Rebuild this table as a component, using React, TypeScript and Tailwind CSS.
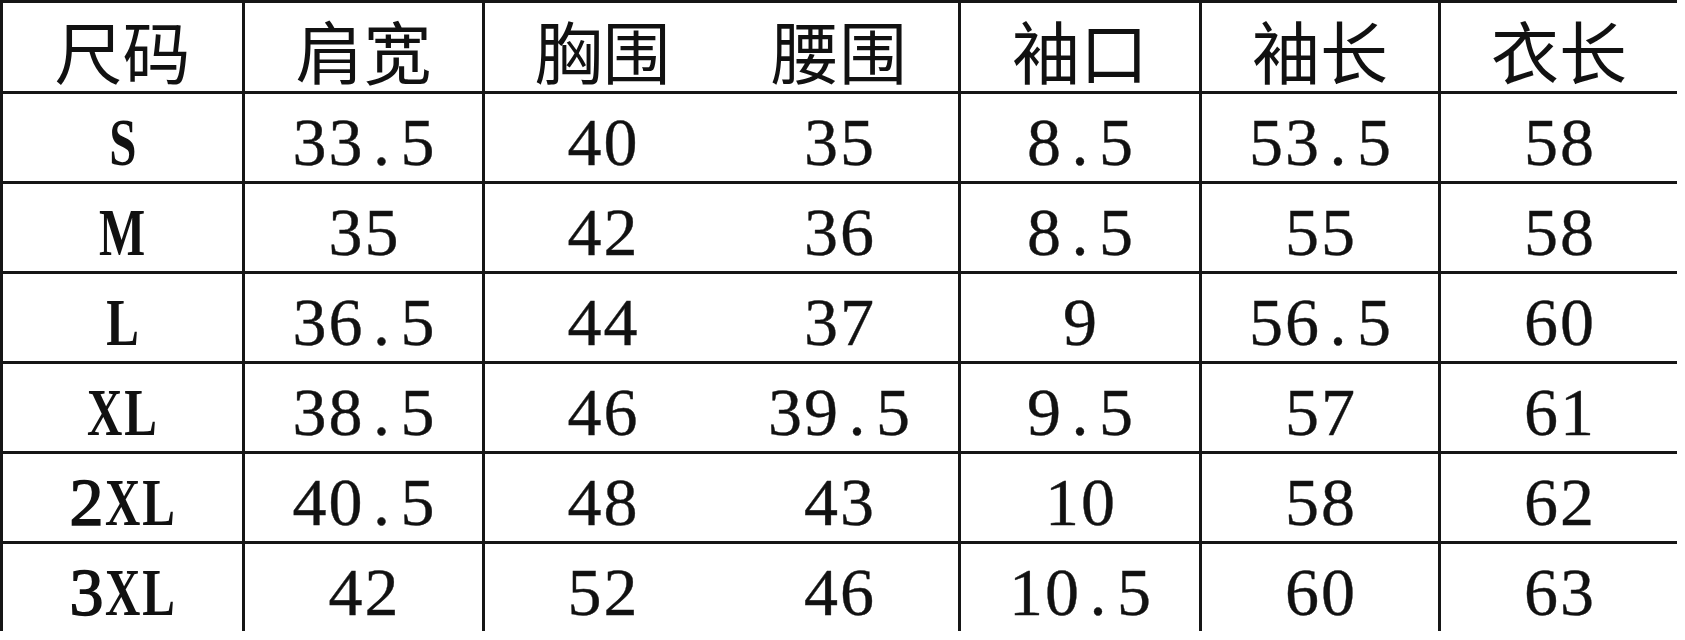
import React from "react";

const headers = ["尺码", "肩宽", "胸围", "腰围", "袖口", "袖长", "衣长"];
const rows: string[][] = [
  ["S", "33.5", "40", "35", "8.5", "53.5", "58"],
  ["M", "35", "42", "36", "8.5", "55", "58"],
  ["L", "36.5", "44", "37", "9", "56.5", "60"],
  ["XL", "38.5", "46", "39.5", "9.5", "57", "61"],
  ["2XL", "40.5", "48", "43", "10", "58", "62"],
  ["3XL", "42", "52", "46", "10.5", "60", "63"],
];

const colW = ["w-[242px]", "w-[240px]", "w-[238px]", "w-[238px]", "w-[241px]", "w-[239px]", "w-[239px]"];

function cellBorder(ci: number) {
  return ci === 3 ? "border-l-0" : "border-l-[3px]";
}

function Mono({ text, first }: { text: string; first: boolean }) {
  return (
    <span className="flex">
      {text.split("").map((ch, i) => {
        const isLetter = /[A-Z]/.test(ch);
        let cls = "inline-block font-normal [-webkit-text-stroke:0.4px_#222]";
        if (first && isLetter) cls = "inline-block font-bold scale-x-[0.72]";
        else if (first) cls = "inline-block font-normal [-webkit-text-stroke:1.6px_#111]";
        return (
          <span key={i} className="flex justify-center w-[36px] text-[68px] leading-none">
            <span className={cls}>{ch}</span>
          </span>
        );
      })}
    </span>
  );
}

export default function App() {
  return (
    <div className="w-[1685px] h-[640px] bg-white overflow-hidden text-[#111]">
      <div className="flex flex-col">
        <div className="flex h-[91px]">
          {headers.map((h, ci) => (
            <div
              key={h}
              className={`${colW[ci]} ${cellBorder(ci)} border-t-[3px] border-[#161616] flex items-center justify-center pt-[6px]`}
              style={{ fontFamily: '"Noto Sans CJK SC", sans-serif' }}
            >
              <span className="text-[68px] leading-none font-normal">{h}</span>
            </div>
          ))}
        </div>
        {rows.map((r, ri) => (
          <div key={ri} className="flex h-[90px]">
            {r.map((v, ci) => (
              <div
                key={ci}
                className={`${colW[ci]} ${cellBorder(ci)} border-t-[3px] border-[#161616] flex items-center justify-center pt-[8px]`}
                style={{ fontFamily: '"Liberation Serif", serif' }}
              >
                <Mono text={v} first={ci === 0} />
              </div>
            ))}
          </div>
        ))}
      </div>
    </div>
  );
}
